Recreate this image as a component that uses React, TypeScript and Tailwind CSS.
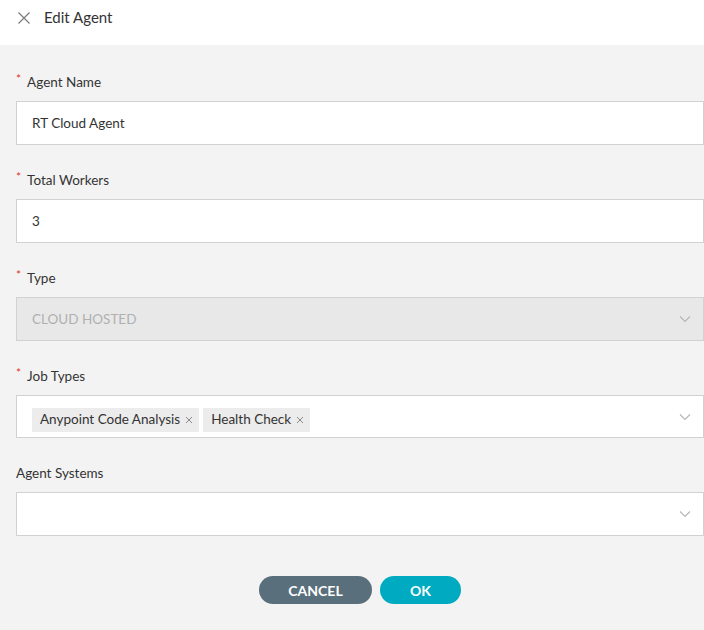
import React from "react";

const Chevron = () => (
  <svg width="12" height="8" viewBox="0 0 12 8" className="shrink-0">
    <path d="M1 1.5 L6 6.5 L11 1.5" fill="none" stroke="#b5b5b5" strokeWidth="1.1" />
  </svg>
);

const SmallX = () => (
  <svg width="8" height="8" viewBox="0 0 8 8" className="shrink-0">
    <path d="M1 1 L7 7 M7 1 L1 7" fill="none" stroke="#8a8a8a" strokeWidth="1" />
  </svg>
);

const Label = ({ text, required }: { text: string; required?: boolean }) => (
  <div className="h-5 flex items-center text-[13.5px] text-[#333] leading-5">
    {required && <span className="text-[#e0362c] text-[12px] mr-[6px] relative -top-[3px]">*</span>}
    <span>{text}</span>
  </div>
);

const Chip = ({ text }: { text: string }) => (
  <div className="h-6 flex items-center gap-[5px] bg-[#ececec] pl-2 pr-[6px] text-[13.5px] text-[#333]">
    <span>{text}</span>
    <SmallX />
  </div>
);

export default function App() {
  return (
    <div className="w-[704px] h-[630px] bg-[#f3f3f3] flex flex-col" style={{ fontFamily: "Lato, 'Open Sans', sans-serif" }}>
      <div className="h-[45px] bg-white shrink-0">
        <div className="h-[35px] flex items-center">
          <svg width="12" height="12" viewBox="0 0 12 12" className="ml-[18px] mr-[14px]">
            <path d="M0.5 0.5 L11.5 11.5 M11.5 0.5 L0.5 11.5" fill="none" stroke="#7a7a7a" strokeWidth="1.2" />
          </svg>
          <span className="text-[15px] text-[#333]">Edit Agent</span>
        </div>
      </div>
      <div className="pl-4 pt-[27px] flex flex-col gap-[25px]">
        <div className="flex flex-col gap-[9px]">
          <Label text="Agent Name" required />
          <div className="h-[44px] bg-white border border-[#d2d2d2] flex items-center px-[15px] text-[13.5px] text-[#333]">
            RT Cloud Agent
          </div>
        </div>
        <div className="flex flex-col gap-[9px]">
          <Label text="Total Workers" required />
          <div className="h-[44px] bg-white border border-[#d2d2d2] flex items-center px-[15px] text-[13.5px] text-[#333]">
            3
          </div>
        </div>
        <div className="flex flex-col gap-[9px]">
          <Label text="Type" required />
          <div className="h-[44px] bg-[#e8e8e8] border border-[#d2d2d2] flex items-center justify-between pl-[15px] pr-[12px] text-[13.5px] text-[#b0b0b0]">
            <span>CLOUD HOSTED</span>
            <Chevron />
          </div>
        </div>
        <div className="flex flex-col gap-[9px]">
          <Label text="Job Types" required />
          <div className="h-[43px] bg-white border border-[#d2d2d2] flex items-center justify-between pl-[15px] pr-[12px]">
            <div className="flex items-center gap-1 mt-[6px]">
              <Chip text="Anypoint Code Analysis" />
              <Chip text="Health Check" />
            </div>
            <Chevron />
          </div>
        </div>
        <div className="flex flex-col gap-[9px]">
          <Label text="Agent Systems" />
          <div className="h-[44px] bg-white border border-[#d2d2d2] flex items-center justify-end pl-[15px] pr-[12px]">
            <Chevron />
          </div>
        </div>
      </div>
      <div className="flex justify-center gap-2 mt-[40px] pl-[16px]">
        <button className="w-[113px] h-[28px] rounded-full bg-[#5a6f7c] text-white text-[14px] font-bold">CANCEL</button>
        <button className="w-[81px] h-[28px] rounded-full bg-[#00abc2] text-white text-[14px] font-bold">OK</button>
      </div>
    </div>
  );
}
